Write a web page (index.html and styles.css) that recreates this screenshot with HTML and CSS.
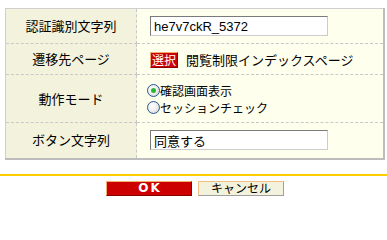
FILE: index.html
```html
<!DOCTYPE html>
<html lang="ja">
<head>
<meta charset="utf-8">
<title>設定</title>
<link rel="stylesheet" href="styles.css">
</head>
<body>
<table class="form">
  <tr class="row row-1">
    <th class="label">認証識別文字列</th>
    <td class="value"><input class="text" type="text" value="he7v7ckR_5372"></td>
  </tr>
  <tr class="row row-2">
    <th class="label">遷移先ページ</th>
    <td class="value"><span class="pick">選択</span><span class="dest">閲覧制限インデックスページ</span></td>
  </tr>
  <tr class="row row-3">
    <th class="label">動作モード</th>
    <td class="value value-radios">
      <div class="radio-line"><span class="radio checked"></span><span class="radio-text">確認画面表示</span></div>
      <div class="radio-line"><span class="radio"></span><span class="radio-text">セッションチェック</span></div>
    </td>
  </tr>
  <tr class="row row-4">
    <th class="label">ボタン文字列</th>
    <td class="value"><input class="text" type="text" value="同意する"></td>
  </tr>
</table>
<div class="rule"></div>
<div class="buttons">
  <button class="btn btn-ok">OK</button>
  <button class="btn btn-cancel">キャンセル</button>
</div>
</body>
</html>
```
FILE: styles.css
```css
html, body {
  margin: 0;
  padding: 0;
  background: #ffffff;
}
body {
  font-family: "Noto Sans CJK JP", "Liberation Sans", sans-serif;
  font-size: 13px;
  color: #000;
}
.form {
  margin: 8px 0 0 5px;
  width: 380px;
  border-collapse: collapse;
  border-top: 1px solid #cfcfcf;
  border-left: 1px solid #cfcfcf;
  border-right: 2px solid #bdbdbd;
  border-bottom: 2px solid #bdbdbd;
}
.label {
  width: 130px;
  background: #f3f3dd;
  font-weight: normal;
  text-align: center;
  vertical-align: middle;
  border-right: 1px dashed #c8c8c8;
  border-bottom: 1px dashed #c8c8c8;
  padding: 0;
  line-height: 16px;
}
.value {
  background: #ffffee;
  border-bottom: 1px dashed #c8c8c8;
  padding: 0 0 0 13px;
  vertical-align: middle;
  line-height: 16px;
}
.row-4 .label, .row-4 .value { border-bottom: none; }
.row-1 { height: 35px; }
.row-2 { height: 31px; }
.row-3 { height: 48px; }
.row-4 { height: 36px; }
.text {
  box-sizing: border-box;
  width: 178px;
  height: 20px;
  margin: 0;
  padding: 0 3px;
  border: 1px solid #cccccc;
  border-top-color: #7a7a7a;
  border-left-color: #7a7a7a;
  background: #fff;
  font-family: "Liberation Sans", "Noto Sans CJK JP", sans-serif;
  font-size: 13px;
  color: #000;
  display: block;
}
.pick {
  display: inline-block;
  box-sizing: border-box;
  width: 28px;
  height: 16px;
  line-height: 14px;
  background: #cc0000;
  color: #fff;
  font-size: 12px;
  text-align: center;
  border: 1px solid #8a0000;
  border-top-color: #f0b070;
  border-left-color: #f0b070;
  vertical-align: middle;
}
.dest {
  margin-left: 8px;
  vertical-align: middle;
}
.value-radios {
  vertical-align: middle;
  padding-left: 10px;
}
.radio-line {
  display: flex;
  align-items: center;
  height: 17px;
}
.radio {
  box-sizing: border-box;
  width: 13px;
  height: 13px;
  border-radius: 50%;
  border: 1px solid #2a5a8a;
  background: radial-gradient(circle at 40% 40%, #ffffff 0%, #f0f0f0 45%, #c8c8c8 100%);
  position: relative;
  flex: none;
}
.radio.checked::after {
  content: "";
  position: absolute;
  left: 3px;
  top: 3px;
  width: 5px;
  height: 5px;
  border-radius: 50%;
  background: #2fb52f;
}
.radio-text {
  font-size: 12px;
  line-height: 17px;
}
.rule {
  margin-top: 14px;
  height: 2px;
  background: #ffcc00;
}
.buttons {
  display: flex;
  justify-content: center;
  gap: 6px;
  margin-top: 5px;
  padding-left: 3px;
}
.btn {
  box-sizing: border-box;
  width: 86px;
  height: 15px;
  margin: 0;
  padding: 0;
  line-height: 12px;
  font-family: "Noto Sans CJK JP", "Liberation Sans", sans-serif;
  font-size: 12px;
  cursor: pointer;
}
.btn-ok {
  background: #cc0000;
  color: #ffffff;
  font-weight: bold;
  letter-spacing: 2px;
  text-indent: 2px;
  border: 1px solid #8a0000;
  border-top-color: #f0b070;
  border-left-color: #f0b070;
  font-family: "DejaVu Sans", sans-serif;
}
.btn-cancel {
  background: #f3f3dd;
  color: #000;
  border: 1px solid #a0a0a0;
  border-top-color: #f0c080;
  border-left-color: #f0c080;
}
```
